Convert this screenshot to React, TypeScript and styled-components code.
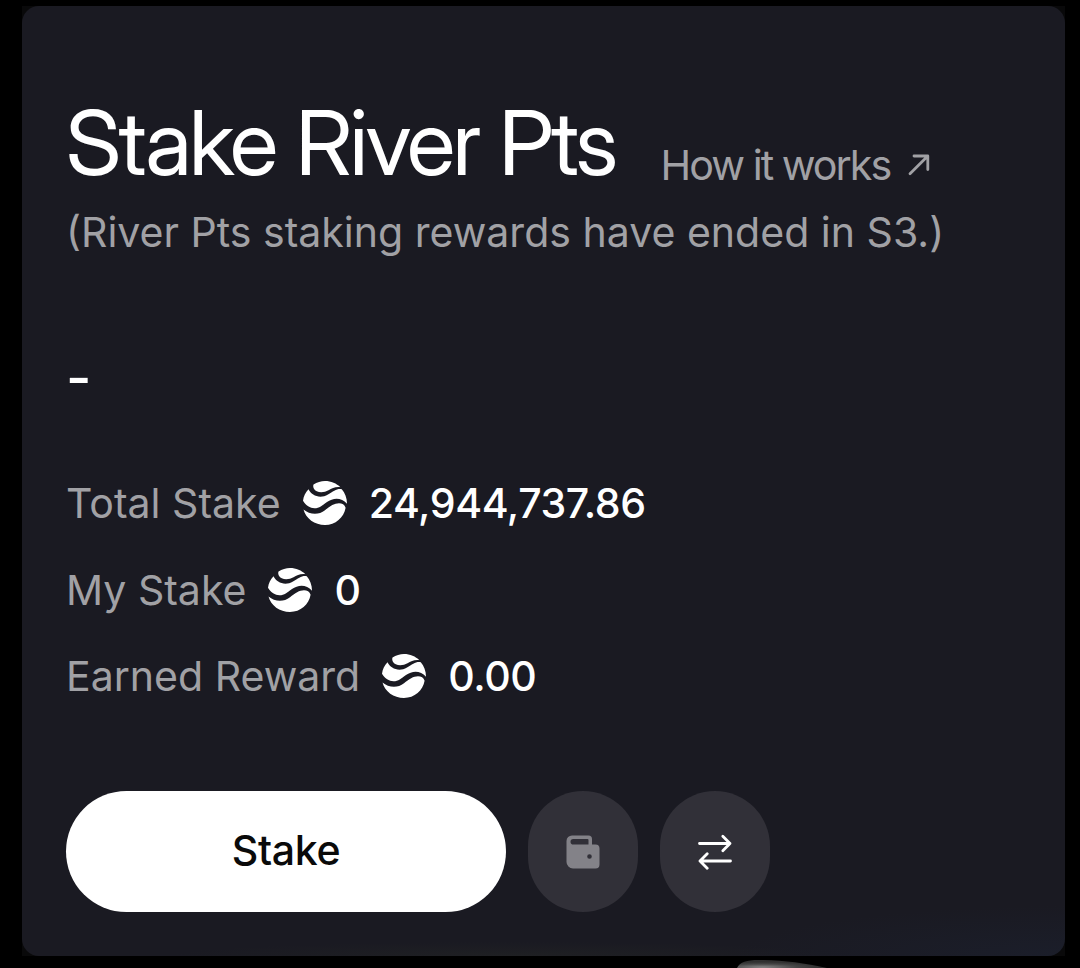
import React from 'react';
import styled, { createGlobalStyle } from 'styled-components';

const stats = [
  { label: 'Total Stake', value: '24,944,737.86' },
  { label: 'My Stake', value: '0' },
  { label: 'Earned Reward', value: '0.00' },
];

const RiverIcon = () => (
  <TokenSvg viewBox="0 0 44 44">
    <path d="M10.5 3.6C14 1.2 18 0 22 0c6 0 11.6 2.400 15.400 6.200C32 5.700 29 7.300 25.500 9.300 20.500 12.200 13 12 10.800 7.500 10.200 6.200 10 4.900 10.500 3.600Z" />
    <path d="M5.500 8.300C8.500 14.500 17 18.300 25 13.500 30.500 10.300 34 7.200 38.800 8.200 42 12 44 17 44 22.700 38.500 16 30 16.500 24 21 19 24.500 16.500 27.300 11.500 27.300 7 27.300 3 24.500 0 19.800 0.500 15.500 2.500 11.500 5.500 8.300Z" />
    <path d="M.5 28.500C6.500 33.500 15.500 34.500 22 29.200 27 25 31.500 22.200 36 22.200 39 22.200 41.800 23.600 42.600 26.800 41 36.500 32.500 44 22 44 11.600 44 2.800 37.500.5 28.500Z" />
  </TokenSvg>
);

const WalletIcon = () => (
  <svg width="34" height="34" viewBox="0 0 34 34" fill="#838288">
    <path
      fillRule="evenodd"
      d="M6 0.500H22.500A3.500 3.500 0 0 1 26 4V9.500H29.500A4 4 0 0 1 33.500 13.500V29.500A4 4 0 0 1 29.500 33.500H7A6.500 6.500 0 0 1 .5 27V6A5.500 5.500 0 0 1 6 .5ZM7.300 4A2.800 2.800 0 0 0 7.300 9.600H22.500V5A1 1 0 0 0 21.500 4ZM23.500 19.200A2.300 2.300 0 1 0 23.500 23.800A2.300 2.300 0 1 0 23.500 19.200Z"
    />
  </svg>
);

const SwapIcon = () => (
  <StrokeSvg width="34" height="36" viewBox="0 0 34 36">
    <path d="M1.500 9.500H32M24.800 2.200L32 9.500L24.800 16.800" />
    <path d="M32.500 27H2M9.200 19.700L2 27L9.200 34.300" />
  </StrokeSvg>
);

const App = () => (
  <Page>
    <GlobalStyle />
    <CardBackdrop>
      <Card>
        <TitleRow>
          <Title>Stake River Pts</Title>
          <HelpLink>
            How it works
            <StrokeSvg width="22" height="22" viewBox="0 0 22 22">
              <path d="M2 19.800L19.800 2M6 2H19.800V15.500" />
            </StrokeSvg>
          </HelpLink>
        </TitleRow>
        <Notice>(River Pts staking rewards have ended in S3.)</Notice>
        <Apr>-</Apr>
        <Stats>
          {stats.map(({ label, value }) => (
            <StatRow key={label}>
              <StatLabel>{label}</StatLabel>
              <RiverIcon />
              <StatValue>{value}</StatValue>
            </StatRow>
          ))}
        </Stats>
        <Actions>
          <StakeButton>Stake</StakeButton>
          <IconButton aria-label="Wallet" disabled>
            <WalletIcon />
          </IconButton>
          <IconButton aria-label="Swap">
            <SwapIcon />
          </IconButton>
        </Actions>
      </Card>
    </CardBackdrop>
    <Orb viewBox="0 0 120 12">
      <defs>
        <radialGradient id="orb" cx="0.28" cy="0.9" r="0.65">
          <stop offset="0" stopColor="#858585" />
          <stop offset="0.6" stopColor="#454545" />
          <stop offset="1" stopColor="#303030" />
        </radialGradient>
      </defs>
      <path d="M2 12C5 5 14 3.500 28 4C50 4.500 70 7 92 12Z" fill="url(#orb)" />
    </Orb>
  </Page>
);

const GlobalStyle = createGlobalStyle`
  * {
    box-sizing: border-box;
  }
  body {
    margin: 0;
    background: #000;
    overflow: hidden;
  }
  button {
    border: 0;
    padding: 0;
    font: inherit;
  }
`;

const Page = styled.div`
  height: 968px;
  padding: 6px 15px 0 22px;
  background: #000;
  color: #fff;
  font-family: Inter, 'Liberation Sans', sans-serif;
  overflow: hidden;
`;

const CardBackdrop = styled.div`
  height: 950px;
  background: #09090a;
`;

const Card = styled.div`
  height: 100%;
  padding: 82px 44px 44px;
  display: flex;
  flex-direction: column;
  border-radius: 17px;
  background:
    radial-gradient(ellipse 330px 50px at 100% 100%, #1b1e2a, transparent),
    radial-gradient(ellipse 340px 14px at 47% 100%, #1f2023, transparent),
    #1a1a22;
`;

const TitleRow = styled.div`
  display: flex;
  align-items: flex-start;
  height: 109px;
`;

const Title = styled.h1`
  margin: 0;
  font-family: 'Inter Display', Inter, sans-serif;
  font-size: 89.8px;
  line-height: 110px;
  font-weight: 400;
  letter-spacing: -0.029em;
  white-space: nowrap;
`;

const HelpLink = styled.a`
  display: flex;
  align-items: center;
  gap: 18px;
  margin: 52px 0 0 45px;
  color: #a1a1a5;
  font-size: 41.25px;
  line-height: 50px;
  letter-spacing: -0.048em;
  white-space: nowrap;
`;

const Notice = styled.div`
  height: 70px;
  color: #a1a1a5;
  font-size: 41.05px;
  line-height: 70px;
  white-space: nowrap;
`;

const Apr = styled.div`
  margin-top: 75px;
  height: 70px;
  font-size: 55px;
  line-height: 70px;
  font-weight: 500;
`;

const Stats = styled.div`
  display: flex;
  flex-direction: column;
  gap: 36.7px;
  margin-top: 66px;
`;

const StatRow = styled.div`
  display: flex;
  align-items: center;
  gap: 22px;
  height: 50px;
  font-size: 41.05px;
  line-height: 50px;
`;

const StatLabel = styled.span`
  color: #a1a1a5;
`;

const StatValue = styled.span`
  font-weight: 500;
  letter-spacing: -0.4px;
`;

const TokenSvg = styled.svg`
  width: 44px;
  height: 44px;
  fill: #fff;
`;

const StrokeSvg = styled.svg`
  fill: none;
  stroke: currentColor;
  stroke-width: 2.8;
  stroke-linecap: round;
  stroke-linejoin: round;
`;

const Actions = styled.div`
  display: flex;
  gap: 22px;
  height: 121px;
  margin-top: auto;
`;

const StakeButton = styled.button`
  width: 440px;
  border-radius: 61px;
  background: #fff;
  color: #0a0a0a;
  && {
    padding-bottom: 3px;
    font-size: 41.05px;
    font-weight: 500;
    letter-spacing: -0.3px;
  }
`;

const IconButton = styled.button`
  display: flex;
  align-items: center;
  justify-content: center;
  width: 110px;
  border-radius: 55px;
  background: #313038;
  color: #fff;
`;

const Orb = styled.svg`
  display: block;
  width: 120px;
  height: 12px;
  margin-left: 713px;
`;

export default App;
